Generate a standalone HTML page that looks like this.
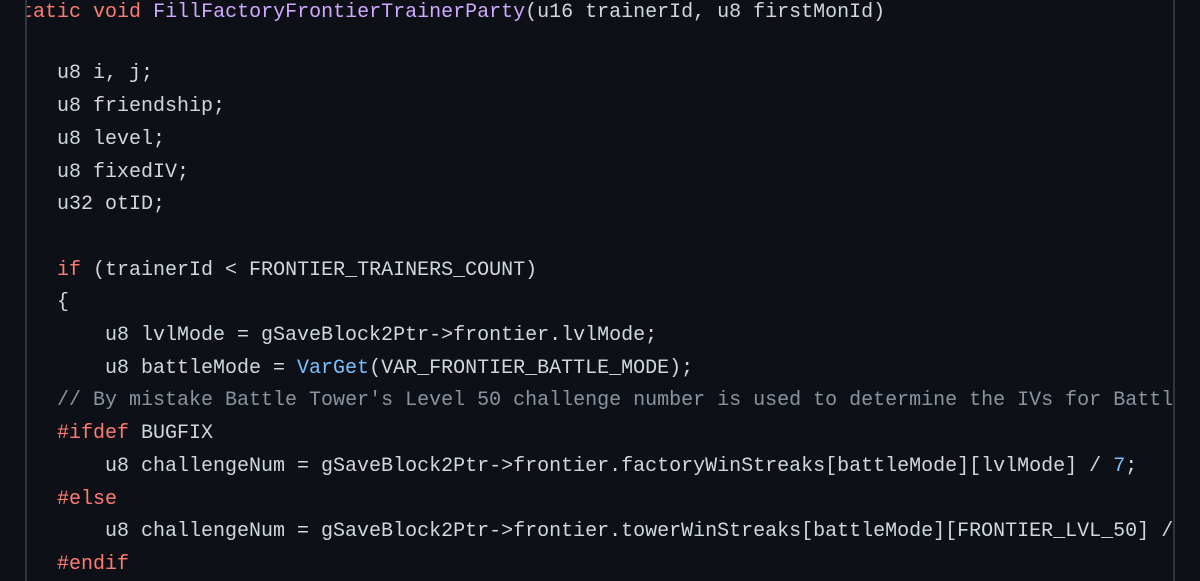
<!DOCTYPE html>
<html><head><style>
html,body{margin:0;padding:0;background:#0d1117;width:1200px;height:581px;overflow:hidden}
.wrap{position:absolute;left:25px;top:0;width:1146px;height:581px;overflow:hidden;border-left:2px solid #30363d;border-right:2px solid #30363d}
pre{position:absolute;left:-18px;margin:0;font-family:"Liberation Mono",monospace;font-size:20px;line-height:32.7px;color:#d0d7de;white-space:pre}
.k{color:#ff7b72}.f{color:#d2a8ff}.c{color:#8b949e}.b{color:#79c0ff}
</style></head><body>
<div class="wrap"><pre style="top:-3px"><span class="k">static</span> <span class="k">void</span> <span class="f">FillFactoryFrontierTrainerParty</span>(u16 trainerId, u8 firstMonId)</pre><pre style="top:-7px">


    u8 i, j;
    u8 friendship;
    u8 level;
    u8 fixedIV;
    u32 otID;

    <span class="k">if</span> (trainerId &lt; FRONTIER_TRAINERS_COUNT)
    {
        u8 lvlMode = gSaveBlock2Ptr-&gt;frontier.lvlMode;
        u8 battleMode = <span class="b">VarGet</span>(VAR_FRONTIER_BATTLE_MODE);
    <span class="c">// By mistake Battle Tower's Level 50 challenge number is used to determine the IVs for Battle Factory</span>
    <span class="k">#ifdef</span> BUGFIX
        u8 challengeNum = gSaveBlock2Ptr-&gt;frontier.factoryWinStreaks[battleMode][lvlMode] / <span class="b">7</span>;
    <span class="k">#else</span>
        u8 challengeNum = gSaveBlock2Ptr-&gt;frontier.towerWinStreaks[battleMode][FRONTIER_LVL_50] / <span class="b">7</span>;
    <span class="k">#endif</span>
</pre></div>
</body></html>
